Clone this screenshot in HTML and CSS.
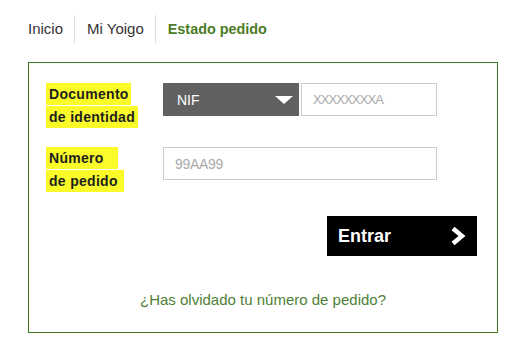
FILE: index.html
```html
<!DOCTYPE html>
<html lang="es">
<head>
    <meta charset="UTF-8">
    <meta name="viewport" content="width=device-width, initial-scale=1.0">
    <title>Estado pedido</title>
    <link rel="stylesheet" href="styles.css">
</head>
<body>
    <nav class="breadcrumb">
        <a class="crumb" href="#">Inicio</a>
        <a class="crumb" href="#">Mi Yoigo</a>
        <span class="crumb crumb-active">Estado pedido</span>
    </nav>

    <div class="order-box">
        <div class="form-row">
            <label class="field-label">
                <span class="hl">Documento</span><br>
                <span class="hl hl-long">de identidad</span>
            </label>
            <div class="fields">
                <div class="doc-select">
                    <span>NIF</span>
                    <svg class="caret" width="18" height="8" viewBox="0 0 18 8">
                        <polygon points="0,0 18,0 9,8" fill="#fff"/>
                    </svg>
                </div>
                <input type="text" class="text-input doc-input" placeholder="XXXXXXXXA">
            </div>
        </div>

        <div class="form-row">
            <label class="field-label">
                <span class="hl hl-num">Número</span><br>
                <span class="hl hl-ped">de pedido</span>
            </label>
            <div class="fields">
                <input type="text" class="text-input order-input" placeholder="99AA99">
            </div>
        </div>

        <div class="actions">
            <button class="enter-button">
                Entrar
                <svg width="16" height="20" viewBox="0 0 16 20">
                    <polyline points="3,2.5 12,10 3,17.5" fill="none" stroke="#fff" stroke-width="4.5" stroke-linejoin="miter"/>
                </svg>
            </button>
        </div>

        <p class="forgot"><a href="#">¿Has olvidado tu número de pedido?</a></p>
    </div>
</body>
</html>
```

FILE: styles.css
```css
body {
    margin: 0;
    font-family: "Liberation Sans", Arial, sans-serif;
    color: #222;
    background-color: #fff;
}

.breadcrumb {
    display: flex;
    padding: 15px 0 0 28px;
}

.crumb {
    font-size: 15px;
    line-height: 28px;
    color: #333;
    text-decoration: none;
    padding: 0 11px 0 12px;
    border-left: 1px solid #ddd;
}

.crumb:first-child {
    padding-left: 0;
    border-left: none;
}

.crumb-active {
    font-size: 14.4px;
    font-weight: bold;
    color: #4b7c26;
}

.order-box {
    margin: 19px 0 0 28px;
    width: 468px;
    height: 249px;
    border: 1px solid #3d7a1f;
    padding: 20px 0 0 0;
}

.form-row {
    display: flex;
    padding-left: 17px;
    margin-bottom: 18px;
}

.field-label {
    width: 117px;
    font-size: 14px;
    font-weight: bold;
    line-height: 23px;
    letter-spacing: 0.3px;
    color: #1e1e1e;
}

.hl {
    display: inline-block;
    background-color: #fbfb2a;
    padding: 0 2px 0 3px;
    line-height: 22px;
}

.hl-long {
    padding-right: 3px;
}

.hl-num {
    padding-right: 14px;
}

.hl-ped {
    padding-right: 6px;
}

.fields {
    display: flex;
    gap: 2px;
}

.doc-select {
    width: 136px;
    height: 33px;
    background-color: #616161;
    color: #fff;
    font-size: 14px;
    display: flex;
    align-items: center;
    justify-content: space-between;
    padding: 0 6px 0 14px;
    box-sizing: border-box;
}

.caret {
    margin-top: 1px;
}

.text-input {
    height: 33px;
    border: 1px solid #ccc;
    box-sizing: border-box;
    padding: 0 0 0 11px;
    font-family: "Liberation Sans", Arial, sans-serif;
    font-size: 14px;
    outline: none;
    margin: 0;
}

.text-input::placeholder {
    color: #a9a9a9;
}

.doc-input {
    width: 136px;
    font-size: 13px;
    letter-spacing: -0.9px;
}

.order-input {
    width: 274px;
    letter-spacing: -0.3px;
}

.actions {
    display: flex;
    justify-content: flex-end;
    padding-right: 20px;
    margin-top: 23px;
}

.enter-button {
    width: 150px;
    height: 40px;
    background-color: #000;
    color: #fff;
    border: none;
    font-family: "Liberation Sans", Arial, sans-serif;
    font-size: 18px;
    font-weight: bold;
    display: flex;
    align-items: center;
    justify-content: space-between;
    padding: 0 11px 0 11px;
    cursor: pointer;
}

.forgot {
    margin: 35px 0 0 0;
    text-align: center;
    font-size: 15px;
    line-height: 18px;
}

.forgot a {
    color: #4e7f35;
    text-decoration: none;
}
```
